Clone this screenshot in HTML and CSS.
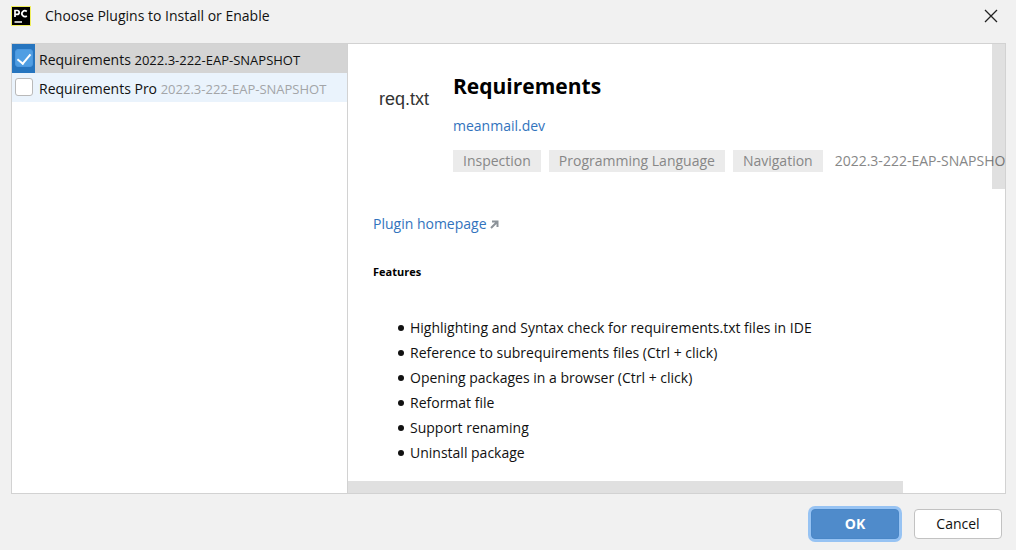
FILE: index.html
```html
<!DOCTYPE html>
<html lang="en">
<head>
<meta charset="utf-8">
<title>Choose Plugins to Install or Enable</title>
<link rel="stylesheet" href="styles.css">
</head>
<body>
<div class="dialog">
  <header class="titlebar">
    <svg class="app-icon" viewBox="0 0 20 20" aria-hidden="true">
      <rect width="20" height="20" fill="#f0ee5a"/>
      <rect x="1" y="1" width="18" height="18" fill="#000"/>
      <path d="M4 11V4.500h2.200a1.900 1.900 0 0 1 0 3.900H4M15.800 5.500a2.900 2.900 0 1 0 0 4.300" fill="none" stroke="#fff" stroke-width="1.700"/>
      <path d="M3.500 16h7.500" stroke="#fff" stroke-width="1.500"/>
    </svg>
    <h1 class="title">Choose Plugins to Install or Enable</h1>
    <button class="close" type="button" aria-label="Close">
      <svg viewBox="0 0 14 14" aria-hidden="true"><path d="M1 1l12 12M13 1L1 13" stroke="#222" stroke-width="1.300" fill="none"/></svg>
    </button>
  </header>
  <main class="panel">
    <div class="plugin-list">
      <label class="plugin selected">
        <span class="tick"><input type="checkbox" class="box" checked></span>
        <span class="name">Requirements <span class="version">2022.3-222-EAP-SNAPSHOT</span></span>
      </label>
      <label class="plugin">
        <span class="tick"><input type="checkbox" class="box"></span>
        <span class="name">Requirements Pro <span class="version">2022.3-222-EAP-SNAPSHOT</span></span>
      </label>
    </div>
    <section class="details">
      <div class="summary">
        <span class="logo">req.txt</span>
        <div class="info">
          <h2 class="heading">Requirements</h2>
          <a class="link" href="#vendor">meanmail.dev</a>
          <div class="tags">
            <span class="tag">Inspection</span>
            <span class="tag">Programming Language</span>
            <span class="tag">Navigation</span>
            <span class="build">2022.3-222-EAP-SNAPSHOT</span>
          </div>
        </div>
      </div>
      <a class="link homepage" href="#homepage">Plugin homepage
        <svg class="arrow" viewBox="0 0 9 9" aria-hidden="true"><path d="M2 1.500h5.500V7M7.500 1.500L1 8" fill="none" stroke="#8c9399" stroke-width="2"/></svg>
      </a>
      <h3 class="subheading">Features</h3>
      <ul class="features">
        <li>Highlighting and Syntax check for requirements.txt files in IDE</li>
        <li>Reference to subrequirements files (Ctrl + click)</li>
        <li>Opening packages in a browser (Ctrl + click)</li>
        <li>Reformat file</li>
        <li>Support renaming</li>
        <li>Uninstall package</li>
      </ul>
      <span class="scroll-y"></span>
      <span class="scroll-x"></span>
    </section>
  </main>
  <footer class="actions">
    <button class="button primary" type="button">OK</button>
    <button class="button" type="button">Cancel</button>
  </footer>
</div>
</body>
</html>
```
FILE: styles.css
```css
* { box-sizing: border-box; }
body {
  margin: 0;
  background: #f1f1f1;
  color: #111;
  font: 14px/20px "Open Sans", "Noto Sans", sans-serif;
}
h1, h2, h3, ul { margin: 0; padding: 0; }
.dialog {
  display: flex;
  flex-direction: column;
  min-height: 100vh;
  padding: 0 10px 8px 11px;
}
.titlebar {
  display: flex;
  align-items: center;
  height: 43px;
  padding-bottom: 12px;
}
.app-icon { width: 20px; height: 20px; }
.title { flex: 1; margin-left: 14px; font-size: 14px; font-weight: 400; }
.close {
  display: flex;
  padding: 0;
  margin-right: 8px;
  border: 0;
  background: none;
}
.close svg { width: 14px; height: 14px; }
.panel {
  display: flex;
  flex: 1;
  border: 1px solid #d2d2d2;
  background: #fff;
}
.plugin-list { flex: 0 0 336px; border-right: 1px solid #d2d2d2; }
.plugin { display: flex; height: 29px; background: #eaf3fc; }
.plugin.selected { background: #d4d4d4; }
.tick { width: 23px; padding: 5px 3px; }
.selected .tick { background: #2675bf; }
.name { padding: 6px 0 0 4px; white-space: nowrap; }
.version { font-size: 13px; color: #a3a5a8; }
.selected .version { color: #111; }
.box {
  appearance: none;
  display: block;
  width: 18px;
  height: 18px;
  margin: 0;
  border: 1px solid #b9b9b9;
  border-radius: 3px;
  background: #fff;
}
.box:checked { border-color: #4b97df; background: #4f9ee3; }
.box:checked::after {
  content: "";
  display: block;
  width: 6px;
  height: 11px;
  margin: 1px auto;
  border: solid #fff;
  border-width: 0 2px 2px 0;
  transform: rotate(40deg);
}
.details {
  position: relative;
  flex: 1;
  min-width: 0;
  overflow: hidden;
  padding: 28px 0 23px 25px;
}
.summary { display: flex; gap: 22px; }
.logo {
  width: 58px;
  padding: 17px 0 0 6px;
  flex-shrink: 0;
  font: 18px/20px "Liberation Sans", Arial, sans-serif;
  color: #333;
}
.heading { font-size: 21px; line-height: 28px; color: #000; }
.info .link { display: inline-block; margin-top: 16px; }
.link { color: #3273bd; text-decoration: none; }
.tags { display: flex; gap: 8px; margin-top: 14px; line-height: 22px; white-space: nowrap; color: #878787; }
.tag { padding: 0 10px; background: #ebebeb; }
.build { margin-left: 4px; }
.homepage { display: block; margin-top: 42px; }
.arrow { width: 9px; height: 9px; }
.subheading { margin-top: 29px; font-size: 11px; line-height: 18px; color: #000; }
.features { margin-top: 34px; padding-left: 37px; line-height: 25px; list-style: none; }
.features li { display: flex; align-items: center; }
.features li::before {
  content: "";
  width: 6px;
  height: 6px;
  margin: 0 6px 0 -12px;
  border-radius: 50%;
  background: #111;
}
.scroll-y, .scroll-x { position: absolute; background: rgba(0, 0, 0, 0.12); }
.scroll-y { top: 0; right: 0; width: 13px; height: 145px; }
.scroll-x { bottom: 0; left: 0; width: 555px; height: 12px; }
.actions { display: flex; justify-content: flex-end; align-items: center; gap: 15px; padding: 12px 4px 0 0; height: 48px; }
.button {
  width: 88px;
  height: 30px;
  padding: 0;
  border: 1px solid #c2c2c2;
  border-radius: 4px;
  background: #fff;
  color: #111;
  font: inherit;
}
.primary {
  border-color: #4a87c7;
  background: #4f8bcb;
  color: #fff;
  font-weight: 700;
  box-shadow: 0 0 0 3px #97c3f3;
}
```
